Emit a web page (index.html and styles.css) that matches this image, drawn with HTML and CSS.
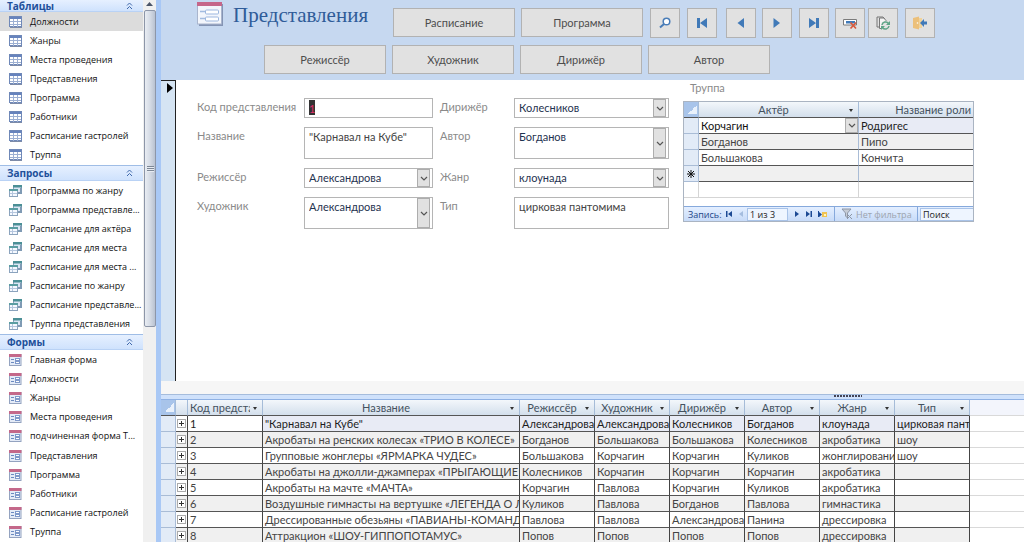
FILE: index.html
```html
<!DOCTYPE html>
<html lang="ru">
<head>
<meta charset="utf-8">
<title>Представления</title>
<link rel="stylesheet" href="styles.css">
</head>
<body>
<svg class="defs" aria-hidden="true">
  <symbol id="i-table" viewBox="0 0 13 12"><rect x=".5" y=".5" width="12" height="10" fill="#fff" stroke="#6f88b8"/><path d="M1 1h11v2H1z" fill="#6683bd"/><path d="M1 5.500h11M1 8.500h11M4.500 3v8M8.500 3v8" stroke="#9db0d3"/><path d="M1 11.500h12" stroke="#7d8ba8"/></symbol>
  <symbol id="i-query" viewBox="0 0 13 12"><rect x="4.500" y=".5" width="8" height="7" fill="#dbe6f5" stroke="#8ba3bd"/><path d="M4 0h9v2.500H4z" fill="#4b8f96"/><path d="M11 3h2v6H9V7h2z" fill="#7f9ab4"/><rect x=".5" y="4.500" width="8" height="7" fill="#f5f9ff" stroke="#8ba3bd"/><path d="M0 4h9v2H0z" fill="#5a9da2"/><path d="M3.500 6v5M1 8.500h7" stroke="#b5c6de"/></symbol>
  <symbol id="i-form" viewBox="0 0 13 12"><rect x=".5" y=".5" width="11.500" height="11" fill="#e4ebf7" stroke="#94a3c0"/><path d="M0 0h12.500v3H0z" fill="#c4688a"/><path d="M2 5.500h3M2 8.500h3" stroke="#6b8ac0"/><rect x="6.500" y="4.500" width="4" height="2" fill="#fff" stroke="#7f99ca"/><rect x="6.500" y="7.500" width="4" height="2" fill="#fff" stroke="#7f99ca"/></symbol>
  <symbol id="i-up" viewBox="0 0 7 8"><path d="M1 3.500 3.500 1 6 3.500M1 7 3.500 4.500 6 7" fill="none" stroke="#3f68ab"/></symbol>
  <symbol id="i-chev" viewBox="0 0 8 5"><path d="M1 1 4 4 7 1" fill="none" stroke="#555" stroke-width="1.200"/></symbol>
</svg>
<div class="app">
  <nav class="nav">
    <div class="nav-list">
      <section class="group">
        <h2 class="group-head first">Таблицы<svg class="up"><use href="#i-up"/></svg></h2>
        <ul class="items">
          <li class="item selected"><svg class="ico"><use href="#i-table"/></svg>Должности</li>
          <li class="item"><svg class="ico"><use href="#i-table"/></svg>Жанры</li>
          <li class="item"><svg class="ico"><use href="#i-table"/></svg>Места проведения</li>
          <li class="item"><svg class="ico"><use href="#i-table"/></svg>Представления</li>
          <li class="item"><svg class="ico"><use href="#i-table"/></svg>Программа</li>
          <li class="item"><svg class="ico"><use href="#i-table"/></svg>Работники</li>
          <li class="item"><svg class="ico"><use href="#i-table"/></svg>Расписание гастролей</li>
          <li class="item"><svg class="ico"><use href="#i-table"/></svg>Труппа</li>
        </ul>
      </section>
      <section class="group">
        <h2 class="group-head">Запросы<svg class="up"><use href="#i-up"/></svg></h2>
        <ul class="items">
          <li class="item"><svg class="ico"><use href="#i-query"/></svg>Программа по жанру</li>
          <li class="item"><svg class="ico"><use href="#i-query"/></svg>Программа представле...</li>
          <li class="item"><svg class="ico"><use href="#i-query"/></svg>Расписание для актёра</li>
          <li class="item"><svg class="ico"><use href="#i-query"/></svg>Расписание для места</li>
          <li class="item"><svg class="ico"><use href="#i-query"/></svg>Расписание для места ...</li>
          <li class="item"><svg class="ico"><use href="#i-query"/></svg>Расписание по жанру</li>
          <li class="item"><svg class="ico"><use href="#i-query"/></svg>Расписание представле...</li>
          <li class="item"><svg class="ico"><use href="#i-query"/></svg>Труппа представления</li>
        </ul>
      </section>
      <section class="group">
        <h2 class="group-head">Формы<svg class="up"><use href="#i-up"/></svg></h2>
        <ul class="items long">
          <li class="item"><svg class="ico"><use href="#i-form"/></svg>Главная форма</li>
          <li class="item"><svg class="ico"><use href="#i-form"/></svg>Должности</li>
          <li class="item"><svg class="ico"><use href="#i-form"/></svg>Жанры</li>
          <li class="item"><svg class="ico"><use href="#i-form"/></svg>Места проведения</li>
          <li class="item"><svg class="ico"><use href="#i-form"/></svg>подчиненная форма Т...</li>
          <li class="item"><svg class="ico"><use href="#i-form"/></svg>Представления</li>
          <li class="item"><svg class="ico"><use href="#i-form"/></svg>Программа</li>
          <li class="item"><svg class="ico"><use href="#i-form"/></svg>Работники</li>
          <li class="item"><svg class="ico"><use href="#i-form"/></svg>Расписание гастролей</li>
          <li class="item"><svg class="ico"><use href="#i-form"/></svg>Труппа</li>
        </ul>
      </section>
    </div>
    <div class="scroll">
      <svg class="scroll-arrow" viewBox="0 0 13 10"><path d="M3 6h7L6.500 2z" fill="#4b5568"/></svg>
      <div class="thumb"><span class="grip"></span></div>
    </div>
  </nav>
  <main class="main">
    <header class="head">
      <div class="row">
        <div class="brand">
          <svg class="logo" viewBox="0 0 26 24"><path d="M2 2h24v22H2z" fill="#8494b4"/><rect x=".5" y=".5" width="24" height="21.500" fill="#f3f6fc" stroke="#a9b5cd"/><path d="M0 0h25v4H0z" fill="#c5668a"/><path d="M3 9.500h5M3 16.500h5" stroke="#a3bce0" stroke-width="1.500"/><rect x="8.500" y="8" width="13" height="4" rx="1" fill="#fff" stroke="#9db7df"/><rect x="8.500" y="15" width="13" height="4" rx="1" fill="#fff" stroke="#9db7df"/></svg>
          <h1 class="title">Представления</h1>
        </div>
        <button class="btn">Расписание</button>
        <button class="btn">Программа</button>
        <div class="tools">
          <button class="tool" aria-label="Найти"><svg viewBox="0 0 16 16"><circle cx="9.500" cy="6.500" r="3.300" fill="#fff" stroke="#4a7db8" stroke-width="1.500"/><path d="M7 9 3 12.500" stroke="#4a7db8" stroke-width="2"/></svg></button>
          <button class="tool" aria-label="Первая запись"><svg viewBox="0 0 16 16"><path d="M3 3h3v10H3zM13 3v10L6 8z" fill="#417ab8"/></svg></button>
          <button class="tool" aria-label="Предыдущая запись"><svg viewBox="0 0 16 16"><path d="M11 3v10L4.500 8z" fill="#417ab8"/></svg></button>
          <button class="tool" aria-label="Следующая запись"><svg viewBox="0 0 16 16"><path d="M4.500 3v10L11 8z" fill="#417ab8"/></svg></button>
          <button class="tool" aria-label="Последняя запись"><svg viewBox="0 0 16 16"><path d="M10 3h3v10h-3zM3 3v10l7-5z" fill="#417ab8"/></svg></button>
          <button class="tool" aria-label="Удалить запись"><svg viewBox="0 0 16 16"><path d="M1.500 4.500h13V10h-13z" fill="#fff" stroke="#7b7b7b"/><path d="M4 6h9v2.500H4z" fill="#417ab8"/><path d="m8.500 7.500 5.500 6M14 7.500l-5.500 6" stroke="#d9593c" stroke-width="1.700"/></svg></button>
          <button class="tool" aria-label="Обновить"><svg viewBox="0 0 16 16"><path d="M4 12H2V2h6l2 2" fill="none" stroke="#777"/><path d="M4.500 13.500V3h4.300L11 5.500v8z" fill="#f5f5f5" stroke="#777"/><circle cx="10.500" cy="10.500" r="4.500" fill="#e2e2e2"/><path d="M7 10a3.600 3.600 0 0 1 6.500-1.500M14 11a3.600 3.600 0 0 1-6.500 1.500" fill="none" stroke="#5fa588" stroke-width="1.500"/><path d="M15 6v4h-4zM6 15v-4h4z" fill="#5fa588"/></svg></button>
          <button class="tool" aria-label="Закрыть форму"><svg viewBox="0 0 16 16"><path d="M2 3h8v10H2z" fill="#f1d39a"/><path d="M1 3l6-1.500v13L1 13z" fill="#ecc07a"/><circle cx="5.500" cy="8" r=".8" fill="#fff"/><path d="M8 8l4-4v2.500h3v3h-3V12z" fill="#417ab8"/></svg></button>
        </div>
      </div>
      <div class="row second">
        <button class="btn">Режиссёр</button>
        <button class="btn">Художник</button>
        <button class="btn">Дирижёр</button>
        <button class="btn">Автор</button>
      </div>
    </header>
    <div class="body">
      <div class="selector"><svg class="current" viewBox="0 0 6 10"><path d="M0 0v10l6-5z" fill="#000"/></svg></div>
      <form class="fields">
        <label class="lbl" for="f1">Код представления</label>
        <input class="box code" id="f1" value="1">
        <label class="lbl" for="f2">Дирижёр</label>
        <div class="combo"><select class="box" id="f2"><option>Колесников</option></select><span class="drop"><svg><use href="#i-chev"/></svg></span></div>
        <label class="lbl" for="f3">Название</label>
        <textarea class="box tall" id="f3">"Карнавал на Кубе"</textarea>
        <label class="lbl" for="f4">Автор</label>
        <div class="combo"><select class="box tall" id="f4"><option>Богданов</option></select><span class="drop"><svg><use href="#i-chev"/></svg></span></div>
        <label class="lbl" for="f5">Режиссёр</label>
        <div class="combo"><select class="box" id="f5"><option>Александрова</option></select><span class="drop"><svg><use href="#i-chev"/></svg></span></div>
        <label class="lbl" for="f6">Жанр</label>
        <div class="combo"><select class="box" id="f6"><option>клоунада</option></select><span class="drop"><svg><use href="#i-chev"/></svg></span></div>
        <label class="lbl" for="f7">Художник</label>
        <div class="combo"><select class="box tall" id="f7"><option>Александрова</option></select><span class="drop"><svg><use href="#i-chev"/></svg></span></div>
        <label class="lbl" for="f8">Тип</label>
        <textarea class="box tall" id="f8">цирковая пантомима</textarea>
      </form>
      <section class="troupe">
        <h2 class="troupe-title">Труппа</h2>
        <div class="sub">
          <table class="grid sub-grid">
            <colgroup><col class="c-sel"><col class="c-actor"><col></colgroup>
            <thead><tr><th class="corner"></th><th>Актёр<i class="arr"></i></th><th class="role">Название роли</th></tr></thead>
            <tbody>
              <tr><td class="sel"></td><td class="edit"><div class="cell-combo"><select class="cell-select" aria-label="Актёр"><option>Корчагин</option></select><span class="drop"><svg><use href="#i-chev"/></svg></span></div></td><td class="hot">Родригес</td></tr>
              <tr class="alt"><td class="sel"></td><td>Богданов</td><td>Пипо</td></tr>
              <tr><td class="sel"></td><td>Большакова</td><td>Кончита</td></tr>
              <tr class="alt"><td class="sel"><svg class="star" viewBox="0 0 8 8"><path d="M4 0v8M0 4h8M1 1l6 6M7 1 1 7" stroke="#111"/></svg></td><td></td><td></td></tr>
              <tr class="blank"><td></td><td></td><td></td></tr>
            </tbody>
          </table>
          <div class="gap-row"></div>
          <div class="recnav">
            <span class="rec-label">Запись:</span>
            <button class="rec" aria-label="Первая"><svg viewBox="0 0 6 6"><path d="M0 0h1.500v6H0zM6 0v6L2 3z" fill="#1c4a94"/></svg></button>
            <button class="rec" aria-label="Предыдущая"><svg viewBox="0 0 6 6"><path d="M5 0v6L1 3z" fill="#a4bddf"/></svg></button>
            <input class="rec-pos" aria-label="Номер записи" value="1 из 3">
            <button class="rec" aria-label="Следующая"><svg viewBox="0 0 6 6"><path d="M1 0v6l4-3z" fill="#1c4a94"/></svg></button>
            <button class="rec" aria-label="Последняя"><svg viewBox="0 0 6 6"><path d="M4.500 0H6v6H4.500zM0 0v6l4-3z" fill="#1c4a94"/></svg></button>
            <button class="rec wide" aria-label="Новая"><svg viewBox="0 0 9 7"><path d="M0 0h1v6H0zM1 1v5l3-2.500z" fill="#1c4a94"/><path d="M4 1h5v5H4z" fill="#f0c352"/><path d="M6 3h2v2H6z" fill="#fff3c0"/></svg></button>
            <button class="filter" disabled><svg viewBox="0 0 12 12"><path d="M1 1h9L6.500 5v5l-2-2V5z" fill="#c5cbd5" stroke="#8e97a6"/><path d="m6 6 5 5M11 6l-5 5" stroke="#8e97a6"/></svg>Нет фильтра</button>
            <input class="rec-find" aria-label="Поиск" value="Поиск">
          </div>
        </div>
      </section>
    </div>
    <div class="footer"></div>
    <div class="split"><span class="dots"></span></div>
    <div class="sheet">
      <table class="grid main-grid">
        <colgroup><col class="c-sel"><col class="c-plus"><col class="c-std"><col class="c-name"><col class="c-std"><col class="c-std"><col class="c-std"><col class="c-std"><col class="c-std"><col class="c-std"></colgroup>
        <thead><tr><th class="corner"></th><th></th><th class="left">Код предста<i class="arr"></i></th><th>Название<i class="arr"></i></th><th>Режиссёр<i class="arr"></i></th><th>Художник<i class="arr"></i></th><th>Дирижёр<i class="arr"></i></th><th>Автор<i class="arr"></i></th><th>Жанр<i class="arr"></i></th><th>Тип<i class="arr"></i></th></tr></thead>
        <tbody>
          <tr class="cur"><td class="sel"></td><td class="plus"><i></i></td><td class="id">1</td><td>"Карнавал на Кубе"</td><td>Александрова</td><td>Александрова</td><td>Колесников</td><td>Богданов</td><td>клоунада</td><td>цирковая пант</td></tr>
          <tr class="alt"><td class="sel"></td><td class="plus"><i></i></td><td>2</td><td>Акробаты на ренских колесах «ТРИО В КОЛЕСЕ»</td><td>Богданов</td><td>Большакова</td><td>Большакова</td><td>Колесников</td><td>акробатика</td><td>шоу</td></tr>
          <tr><td class="sel"></td><td class="plus"><i></i></td><td>3</td><td>Групповые жонглеры «ЯРМАРКА ЧУДЕС»</td><td>Большакова</td><td>Корчагин</td><td>Корчагин</td><td>Куликов</td><td>жонглировани</td><td>шоу</td></tr>
          <tr class="alt"><td class="sel"></td><td class="plus"><i></i></td><td>4</td><td>Акробаты на джолли-джамперах «ПРЫГАЮЩИЕ Х</td><td>Колесников</td><td>Корчагин</td><td>Корчагин</td><td>Корчагин</td><td>акробатика</td><td></td></tr>
          <tr><td class="sel"></td><td class="plus"><i></i></td><td>5</td><td>Акробаты на мачте «МАЧТА»</td><td>Корчагин</td><td>Павлова</td><td>Корчагин</td><td>Куликов</td><td>акробатика</td><td></td></tr>
          <tr class="alt"><td class="sel"></td><td class="plus"><i></i></td><td>6</td><td>Воздушные гимнасты на вертушке «ЛЕГЕНДА О ЛЮ</td><td>Куликов</td><td>Павлова</td><td>Богданов</td><td>Павлова</td><td>гимнастика</td><td></td></tr>
          <tr><td class="sel"></td><td class="plus"><i></i></td><td>7</td><td>Дрессированные обезьяны «ПАВИАНЫ-КОМАНДО</td><td>Павлова</td><td>Павлова</td><td>Александрова</td><td>Панина</td><td>дрессировка</td><td></td></tr>
          <tr class="alt"><td class="sel"></td><td class="plus"><i></i></td><td>8</td><td>Аттракцион «ШОУ-ГИППОПОТАМУС»</td><td>Попов</td><td>Попов</td><td>Попов</td><td>Попов</td><td>дрессировка</td><td></td></tr>
        </tbody>
      </table>
      <div class="rest"></div>
    </div>
  </main>
</div>
</body>
</html>
```
FILE: styles.css
```css
* { box-sizing: border-box; }
body { margin: 0; overflow: hidden; background: #fff; font: 11px/16px Lato, "Open Sans", "Noto Sans", sans-serif; color: #444; }
h1, h2, ul { margin: 0; padding: 0; font-weight: normal; }
button, input, select, textarea { font: inherit; color: inherit; margin: 0; border-radius: 0; }
svg { display: block; flex: none; }
.defs { position: absolute; width: 0; height: 0; }
.app { display: flex; height: 100vh; }

/* navigation pane */
.nav { display: flex; flex: none; width: 161px; font-family: "Open Sans", "Noto Sans", sans-serif; border-right: 5px solid #a9c8f5; box-shadow: inset -1px 0 #7da2db; }
.nav-list { width: 143px; overflow: hidden; }
.group-head { display: flex; align-items: center; justify-content: space-between; height: 16px; padding: 0 10px 0 7px; font-size: 10px; font-weight: bold; color: #21509a; background: linear-gradient(#e6f0ff, #cfe2fd); border-top: 1px solid #9fbde6; border-bottom: 1px solid #b9d2f5; }
.first { height: 12px; border-top: 0; }
.up { width: 7px; height: 8px; }
.items { display: grid; grid-auto-rows: 1fr; min-height: 153px; list-style: none; }
.long { min-height: 192px; }
.item { display: flex; align-items: center; gap: 8px; padding-left: 9px; font-size: 9px; color: #111; white-space: nowrap; }
.selected { background: #dcdcdc; }
.ico { width: 13px; height: 12px; }
.scroll { flex: 1; background: #f0f0f0; }
.scroll-arrow { width: 13px; height: 10px; }
.thumb { display: flex; align-items: center; justify-content: center; width: 12px; height: 317px; margin-left: 1px; border: 1px solid #8d96a8; border-radius: 2px; background: linear-gradient(90deg, #e9edf3, #d5dbe5 50%, #b9c2d1); }
.grip { width: 7px; height: 6px; background: repeating-linear-gradient(#7d8796 0 1px, #e8ecf2 1px 2px); }

/* form header */
.main { flex: 1; min-width: 0; display: flex; flex-direction: column; }
.head { height: 80px; padding-top: 8px; background: #c6d8f0; display: flex; flex-direction: column; gap: 7px; overflow: hidden; }
.row { display: flex; gap: 6px; height: 30px; }
.second { padding-left: 103px; }
.brand { display: flex; gap: 10px; width: 226px; padding-left: 36px; margin-top: -6px; }
.logo { width: 26px; height: 24px; }
.title { font: 21px/26px "Liberation Serif", serif; color: #2f5c99; }
.btn, .tool { border: 1px solid #b2b2b2; background: #e1e1e1; padding: 0; height: 29px; }
.btn { width: 122px; color: #4d4d4d; }
.tools { display: grid; grid-template-columns: 37px 39px 36px 37px 36px 33px 37px 30px; margin-left: 1px; }
.tool { width: 30px; height: 30px; display: grid; place-items: center; }
.tool svg { width: 16px; height: 16px; }

/* form body */
.body { flex: none; display: flex; align-items: flex-start; min-height: 301px; background: #fff; }
.selector { align-self: stretch; flex: none; width: 15px; background: #d5e4f3; border-top: 1px solid #222; border-right: 1px solid #222; }
.current { width: 6px; height: 10px; margin: 2px 0 0 6px; }
.fields { display: grid; grid-template-columns: 107px 129px 81px 155px; grid-template-rows: 20px 32px 20px 32px; row-gap: 9px; padding: 18px 0 0 21px; }
.fields > :nth-child(4n + 3) { padding-left: 7px; }
.lbl { color: #8a8a8a; line-height: 18px; }
.box { display: block; width: 100%; height: 20px; padding: 0 4px; border: 1px solid #b5b5b5; background: #fff; line-height: 18px; outline: 0; appearance: none; resize: none; overflow: hidden; }
.tall { height: 32px; padding-bottom: 12px; }
select.box { color: #1f3350; }
.code { color: #e0306a; background: linear-gradient(#333, #333) 4px 1px / 6px 15px no-repeat #fff; }
.combo, .cell-combo { display: grid; }
.combo > *, .cell-combo > * { grid-area: 1 / 1; }
.drop { justify-self: end; width: 13px; margin: 1px 3px 1px 0; border: 1px solid #adadad; background: #e1e1e1; display: grid; place-items: center; pointer-events: none; z-index: 1; }
.drop svg { width: 8px; height: 5px; }
.troupe { width: 291px; margin-left: 14px; }
.troupe-title { padding-left: 7px; font-size: 11px; line-height: 16px; color: #8a8a8a; height: 21px; }
.sub { border: 1px solid #aab4c2; }

/* datasheets */
.grid { table-layout: fixed; border-collapse: separate; border-spacing: 0; }
.grid th, .grid td { height: 16px; padding: 0 2px; line-height: 15px; white-space: nowrap; overflow: hidden; border-right: 1px solid #444; border-bottom: 1px solid #555; text-align: left; }
.grid th { position: relative; font-weight: normal; text-align: center; color: #44525f; background: linear-gradient(#f3f7fb, #d3dfec); border-right-color: #a5bcd8; padding-right: 12px; }
.grid th.left { text-align: left; }
.arr { position: absolute; right: 0; top: 0; width: 12px; height: 15px; background: linear-gradient(#f3f7fb, #d3dfec); }
.arr::after { content: ""; position: absolute; left: 3px; top: 7px; border: 2px solid transparent; border-top: 3px solid #333; border-bottom: 0; }
.grid th.corner { background: linear-gradient(135deg, transparent 50%, #e9f1fb 50%) 4px 3px / 9px 9px no-repeat #a8c4ea; }
.grid .sel { padding: 0; background: #e2ebf7; border-color: #a9bcd6; }
.alt td { background: #f0f0f0; }
.c-sel { width: 15px; }
.c-plus { width: 12px; }
.c-std { width: 75px; }
.c-name { width: 257px; }
.c-actor { width: 160px; }
.main-grid { width: 809px; flex: none; }
.cur td { background: #e8ebf5; color: #1d1d1d; }
.cur .id, .cur .plus { background: #fff; }
.grid .plus { padding: 0 1px; }
.plus i { display: block; width: 9px; height: 9px; border: 1px solid #aaa; background: linear-gradient(#333, #333) 1px 3px / 5px 1px no-repeat, linear-gradient(#333, #333) 3px 1px / 1px 5px no-repeat #fff; }
.sub-grid { width: 100%; }
.sub-grid td { border-right-color: #a9bcd6; }
.grid th.role { padding-right: 2px; text-align: right; }
.sub-grid th:last-child, .sub-grid td:last-child { border-right: 0; }
.grid .edit { padding: 0; color: #111; }
.cell-select { appearance: none; height: 15px; width: 100%; padding: 0 2px; border: 0; background: #fff; outline: 0; line-height: 15px; }
.cell-combo .drop { margin: 0; }
.hot { background: #e8ebf5; color: #1d1d1d; }
.blank td { border-color: #d5d5d5; }
.star { width: 8px; height: 8px; margin-left: 3px; }
.gap-row { height: 8px; }

/* record navigator */
.recnav { display: flex; align-items: center; height: 15px; padding-left: 4px; font: 9px "Open Sans", "Noto Sans", sans-serif; color: #1f4788; background: linear-gradient(#e4efff, #c7dbf8); border-top: 1px solid #86a9dc; overflow: hidden; white-space: nowrap; }
.rec-label { width: 35px; }
.rec { width: 12px; border: 0; background: none; padding: 0; display: grid; place-items: center; }
.rec svg { width: 6px; height: 6px; }
.rec.wide { width: 14px; }
.wide svg { width: 9px; height: 7px; }
.rec-pos, .rec-find { height: 13px; padding: 0 2px; border: 1px solid #a9c3e8; background: #eef5ff; color: #222; font-size: 9px; outline: 0; }
.rec-pos { width: 41px; margin-right: 3px; }
.filter { display: flex; align-items: center; gap: 3px; width: 84px; height: 15px; margin-left: 5px; padding: 0 0 0 6px; border: 0; border-left: 1px solid #86a9dc; border-right: 1px solid #86a9dc; background: none; color: #9da4ae; }
.filter svg { width: 12px; height: 12px; }
.rec-find { flex: 1; min-width: 0; margin-left: 2px; border-right: 0; }

.footer { height: 13px; flex: none; background: #f6f6f6; }
.split { height: 6px; flex: none; display: flex; justify-content: center; border-top: 1px solid #a5bcdc; border-bottom: 1px solid #8fb1e4; background: #cfe1fb; }
.dots { width: 28px; height: 2px; margin-left: 510px; background: repeating-linear-gradient(90deg, #445 0 2px, transparent 2px 3px); }
.sheet { flex: 1; display: flex; align-items: flex-start; min-height: 0; overflow: hidden; }
.rest { flex: 1; align-self: stretch; background: linear-gradient(#f3f5fc, #f3f5fc) 0 0 / 100% 15px no-repeat, repeating-linear-gradient(#fff 0 15px, #d9d9d9 15px 16px); }
```
